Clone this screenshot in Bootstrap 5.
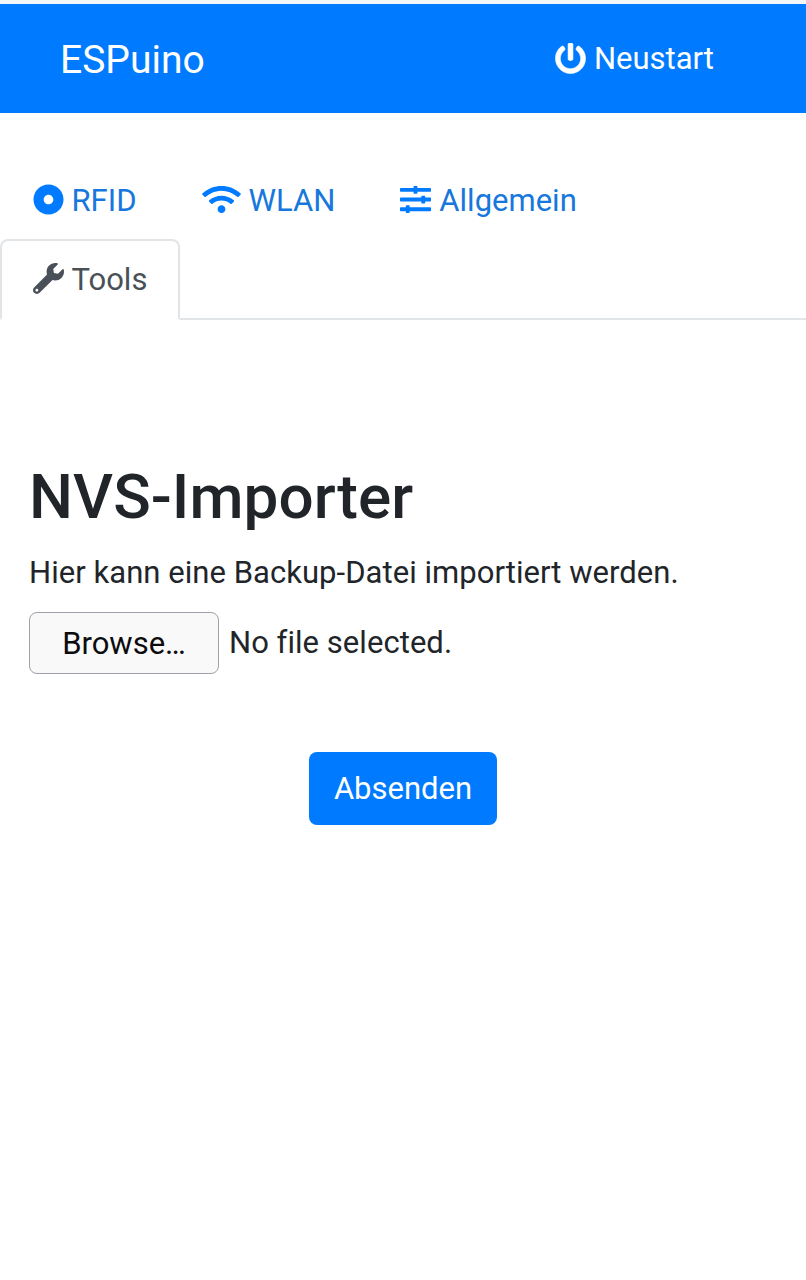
<!DOCTYPE html>
<html lang="de">
<head>
<meta charset="utf-8">
<meta name="viewport" content="width=device-width, initial-scale=1">
<title>ESPuino</title>
<link href="https://cdn.jsdelivr.net/npm/bootstrap@5.3.0/dist/css/bootstrap.min.css" rel="stylesheet">
<style>
body{font-family:Roboto,"Liberation Sans",sans-serif;font-size:31px;line-height:46px;color:#212529;border-top:4px solid #f4f6f8;font-variant-ligatures:none}
svg{fill:currentColor;flex:none}
.topbar{height:109px;background:#007bff;padding:0 92px 0 60px}
.topbar .navbar-brand{font-size:39px;line-height:56px;color:#fff;margin:0;padding:2px 0 0}
.topbar .nav-link{color:#fff;gap:8px}
.topbar .nav-link span{padding-top:1px}
.topbar .nav-link svg{margin-top:-1px}
.main-tabs{margin-top:47px;border-bottom:2px solid #e1e5e8}
.main-tabs .nav-link{height:81px;padding:0 30.5px 2px;gap:8px;border:2px solid transparent;border-radius:8px 8px 0 0;margin-bottom:-2px;color:#007bff}
.main-tabs .nav-link span{color:#1777dc;padding-top:3px}
.main-tabs .nav-link.active{color:#495057;border-color:#e1e5e8 #e1e5e8 #fff}
.main-tabs .nav-link.active span{color:inherit}
.importer{padding:140px 29px 0}
.importer h1{font-size:62px;line-height:74px;font-weight:500;margin:0 0 16px;letter-spacing:.06px}
.importer p,.file-state{letter-spacing:.045px}
.file-state{margin-left:10px}
.browse{width:190px;height:62px;background:#f9f9fa;border:1.5px solid #a0a0a8;border-radius:8px;color:#0c0c0e;font-size:31px;line-height:1;padding:0}
.send{width:188px;height:73px;background:#007bff;border:0;border-radius:8px;color:#fff;font-size:31px;line-height:1;padding:0;margin-top:78px}
</style>
</head>
<body>
<nav class="topbar d-flex align-items-center justify-content-between">
  <a class="navbar-brand" href="#">ESPuino</a>
  <a class="nav-link d-flex align-items-center" href="#"><svg width="31" height="31" viewBox="0 0 512 512"><path d="M400 54.1c63 45 104 118.6 104 201.9 0 136.8-110.8 247.7-247.5 248C120 504.3 8.2 393 8 256.4 7.9 173.1 48.9 99.3 111.8 54.2c11.7-8.3 28-4.8 35 7.700L162.6 90c5.9 10.5 3.1 23.8-6.6 31-41.5 30.8-68 79.6-68 134.9-.1 92.3 74.5 168.1 168 168.1 91.6 0 168.6-74.2 168-169.1-.3-51.8-24.7-101.8-68.1-134-9.7-7.2-12.4-20.5-6.5-30.9l15.8-28.1c7-12.4 23.2-16.1 34.8-7.8zM296 264V24c0-13.3-10.7-24-24-24h-32c-13.3 0-24 10.7-24 24v240c0 13.3 10.7 24 24 24h32c13.3 0 24-10.7 24-24z" stroke="currentColor" stroke-width="10"/></svg><span>Neustart</span></a>
</nav>
<ul class="nav nav-tabs main-tabs">
  <li class="nav-item"><a class="nav-link d-flex align-items-center" href="#"><svg width="31" height="31" viewBox="0 0 512 512"><path d="M256 8C119.033 8 8 119.033 8 256s111.033 248 248 248 248-111.033 248-248S392.967 8 256 8zm80 248c0 44.112-35.888 80-80 80s-80-35.888-80-80 35.888-80 80-80 80 35.888 80 80z"/></svg><span>RFID</span></a></li>
  <li class="nav-item"><a class="nav-link d-flex align-items-center" href="#"><svg width="39" height="31" viewBox="0 0 640 512"><path d="M634.91 154.88C457.74-8.99 182.19-8.93 5.09 154.88c-6.66 6.16-6.79 16.59-.35 22.98l34.24 33.97c6.14 6.1 16.02 6.23 22.4.38 145.92-133.68 371.3-133.71 517.25 0 6.38 5.85 16.26 5.71 22.4-.38l34.24-33.97c6.43-6.39 6.3-16.82-.36-22.98zM320 352c-35.35 0-64 28.65-64 64s28.65 64 64 64 64-28.65 64-64-28.65-64-64-64zm202.67-83.59c-115.26-101.93-290.21-101.82-405.34 0-6.9 6.1-7.12 16.69-.57 23.15l34.44 33.99c6 5.92 15.66 6.32 22.05.8 83.95-72.57 209.74-72.41 293.49 0 6.39 5.52 16.05 5.13 22.05-.8l34.44-33.99c6.56-6.46 6.33-17.06-.56-23.15z"/></svg><span>WLAN</span></a></li>
  <li class="nav-item"><a class="nav-link d-flex align-items-center" href="#"><svg width="31" height="31" viewBox="0 0 512 512"><path d="M496 384H160v-16c0-8.8-7.2-16-16-16h-32c-8.8 0-16 7.2-16 16v16H16c-8.8 0-16 7.2-16 16v32c0 8.8 7.2 16 16 16h80v16c0 8.8 7.2 16 16 16h32c8.8 0 16-7.2 16-16v-16h336c8.8 0 16-7.2 16-16v-32c0-8.8-7.2-16-16-16zm0-160h-80v-16c0-8.8-7.2-16-16-16h-32c-8.8 0-16 7.2-16 16v16H16c-8.8 0-16 7.2-16 16v32c0 8.8 7.2 16 16 16h336v16c0 8.8 7.2 16 16 16h32c8.8 0 16-7.2 16-16v-16h80c8.8 0 16-7.2 16-16v-32c0-8.8-7.2-16-16-16zm0-160H288V48c0-8.8-7.2-16-16-16h-32c-8.8 0-16 7.2-16 16v16H16C7.2 64 0 71.2 0 80v32c0 8.8 7.2 16 16 16h208v16c0 8.8 7.2 16 16 16h32c8.8 0 16-7.2 16-16v-16h208c8.8 0 16-7.2 16-16V80c0-8.8-7.2-16-16-16z"/></svg><span>Allgemein</span></a></li>
  <li class="w-100"></li>
  <li class="nav-item"><a class="nav-link active d-flex align-items-center" href="#"><svg width="31" height="31" viewBox="0 0 512 512"><path d="M507.73 109.1c-2.24-9.03-13.54-12.09-20.12-5.51l-74.36 74.36-67.88-11.31-11.31-67.88 74.36-74.36c6.62-6.62 3.43-17.9-5.66-20.16-47.38-11.74-99.55.91-136.58 37.93-39.64 39.64-50.55 97.1-34.05 147.2L18.74 402.76c-24.99 24.99-24.99 65.51 0 90.5 24.99 24.99 65.51 24.99 90.5 0l213.21-213.21c50.12 16.71 107.47 5.68 147.37-34.22 37.07-37.07 49.7-89.32 37.91-136.73zM64 472c-13.25 0-24-10.75-24-24 0-13.26 10.75-24 24-24s24 10.74 24 24c0 13.25-10.75 24-24 24z"/></svg><span>Tools</span></a></li>
</ul>
<main class="importer">
  <h1>NVS-Importer</h1>
  <form>
    <p class="mb-0">Hier kann eine Backup-Datei importiert werden.</p>
    <div class="d-flex align-items-center mt-3"><button type="button" class="btn browse">Browse…</button><span class="file-state">No file selected.</span></div>
    <div class="text-center"><button type="button" class="btn send">Absenden</button></div>
  </form>
</main>
</body>
</html>
